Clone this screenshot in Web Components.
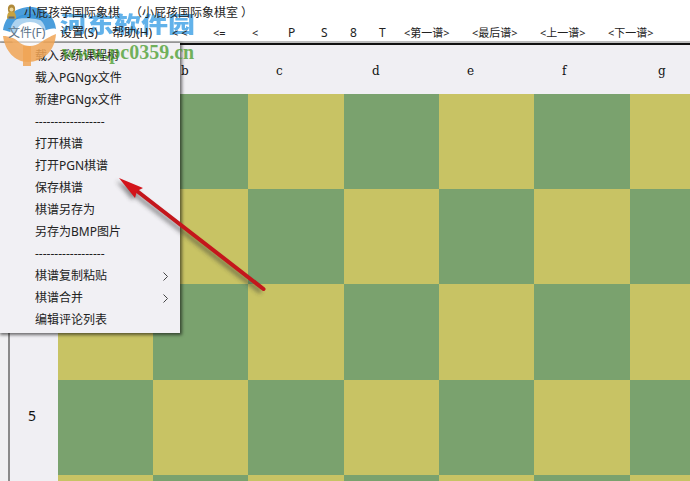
<!DOCTYPE html>
<html lang="zh"><head><meta charset="utf-8"><title>小屁孩学国际象棋</title>
<style>html,body{margin:0;padding:0;background:#fff}body{width:690px;height:481px;overflow:hidden;position:relative;font-family:"Noto Sans","Noto Sans CJK SC",sans-serif}
.open{padding-left:10px}.close{padding-left:3px}</style></head>
<body>
<app-window>
  <title-bar><span>小屁孩学国际象棋<span class="open">（</span>小屁孩国际象棋室<span class="close">）</span></span></title-bar>
  <menu-bar></menu-bar>
  <chess-board></chess-board>
  <file-menu></file-menu>
  <red-arrow></red-arrow>
  <water-mark></water-mark>
</app-window>
<script>
const FONT='"Noto Sans","Noto Sans CJK SC",sans-serif';
function def(name,html,init){customElements.define(name,class extends HTMLElement{constructor(){super();const r=this.attachShadow({mode:'open'});r.innerHTML=html;if(init)init(r);}});}

def('app-window',`<style>:host{display:flex;flex-direction:column;width:690px;height:481px;position:relative;overflow:hidden;background:#fff;color:#1a1a1a;font:12px ${FONT}}</style><slot></slot>`);

def('title-bar',`<style>:host{display:flex;align-items:center;gap:7px;height:22px;padding:1px 0 0 6px;box-sizing:border-box;font:12px "Noto Sans CJK SC",sans-serif;color:#222;position:relative;z-index:2}
svg{flex:none}</style>
<svg width="11" height="15" viewBox="0 0 11 15"><ellipse cx="5.500" cy="5" rx="3.600" ry="4.500" fill="#b08a3a"/><path d="M1 14.500c0-6 2-7 4.500-7s4.500 1 4.500 7z" fill="#c9a23e"/><circle cx="5.500" cy="5.500" r="2" fill="#ecd59a"/><path d="M2.500 12.500h6v2h-6z" fill="#5c6a7a"/></svg>
<slot></slot>`);

def('menu-bar',`<style>:host{display:grid;grid-template-columns:52px 52px 60px 41px 39px 36px 33px 29px 29px 25px 68px 68px 68px 68px;height:21px;padding-left:8px;box-sizing:border-box;align-items:center;font-size:12px;color:#222;line-height:21px;position:relative;z-index:2}
span{white-space:pre}.t{font-size:11px}.f{color:#5d7488}</style>
<span class="f">文件(F)</span><span>设置(S)</span><span>帮助(H)</span><span class="t">&lt; &lt;</span><span class="t">&lt;=</span><span class="t">&lt;</span><span>P</span><span>S</span><span>8</span><span>T</span><span class="t">&lt;第一谱&gt;</span><span class="t">&lt;最后谱&gt;</span><span class="t">&lt;上一谱&gt;</span><span class="t">&lt;下一谱&gt;</span>`);

def('chess-board',`<style>:host{display:flex;flex:1;min-height:0;overflow:hidden;flex-direction:column;border-top:2px solid #111;box-shadow:0 -2px 0 #bdbdbd;background:#f0eff3;box-sizing:border-box}
.wrap{display:flex;flex:1;min-height:0}
.gut{width:8px;flex:none;background:#f0f0f2;border-right:2px solid #8a8a8a}
.grid{display:grid;grid-template-columns:48px 95px 95px 96px 95px 95px 96px 95px;grid-template-rows:49px 95px 95px 96px 95px 95px;align-content:start;flex:none}
.col{font:12px "DejaVu Serif","Liberation Serif",serif;color:#111;display:flex;align-items:center;padding-left:28px;padding-top:2px;box-sizing:border-box}
.row{font:14px "Noto Sans",sans-serif;color:#111;display:flex;justify-content:center;padding:24px 4px 0 0;box-sizing:border-box;line-height:24px}
.y{background:#c8c364}.g{background:#7aa26e}</style>
<div class="wrap"><div class="gut"></div><div class="grid" id="g"></div></div>`,r=>{
  const g=r.getElementById('g');let h='<div></div>';
  'abcdefg'.split('').forEach(c=>h+=`<div class="col">${c==='a'?'':c}</div>`);
  for(let i=0;i<5;i++){h+=`<div class="row">${i===3?'5':''}</div>`;for(let j=0;j<7;j++)h+=`<div class="${(i+j)%2?'g':'y'}"></div>`;}
  g.innerHTML=h;
});

def('file-menu',`<style>:host{position:absolute;left:0;top:43px;width:180px;height:290px;background:#f1f0f4;box-shadow:1px 1px 3px 1px rgba(0,0,0,.55);display:flex;flex-direction:column;padding-top:2px;box-sizing:border-box;font-size:12px;color:#222}
div{height:22px;line-height:22px;padding-left:35px;position:relative;white-space:pre}
.sub svg{position:absolute;left:163px;top:7px}</style>
<div>载入系统课程树</div><div>载入PGNgx文件</div><div>新建PGNgx文件</div><div>------------------</div><div>打开棋谱</div><div>打开PGN棋谱</div><div>保存棋谱</div><div>棋谱另存为</div><div>另存为BMP图片</div><div>------------------</div>
<div class="sub">棋谱复制粘贴<svg width="5" height="9" viewBox="0 0 5 9"><path d="M.5.5l4 4-4 4" fill="none" stroke="#444"/></svg></div>
<div class="sub">棋谱合并<svg width="5" height="9" viewBox="0 0 5 9"><path d="M.5.5l4 4-4 4" fill="none" stroke="#444"/></svg></div>
<div>编辑评论列表</div>`);

def('red-arrow',`<style>:host{position:absolute;left:0;top:0;width:690px;height:481px;pointer-events:none}svg{display:block}</style>
<svg width="690" height="481" viewBox="0 0 690 481"><defs><filter id="s" x="-20%" y="-20%" width="150%" height="150%"><feGaussianBlur stdDeviation="2"/></filter></defs>
<g transform="translate(-3,3)" opacity=".5" filter="url(#s)"><path d="M264 289L136 190" stroke="#333" stroke-width="4.500" fill="none"/><path d="M119 178L143 188L135 197Z" fill="#333"/></g>
<path d="M263.500 289L137 191" stroke="#c4161c" stroke-width="4" fill="none" stroke-linecap="round"/><path d="M119 178L143 188L137 191L135 198Z" fill="#d3141b"/></svg>`);

def('water-mark',`<style>:host{position:absolute;left:0;top:0;width:230px;height:70px;pointer-events:none}
svg{position:absolute;left:0;top:4px}
.a{position:absolute;left:60px;top:5px;font:900 27px/36px "Noto Sans CJK SC",sans-serif;color:rgba(70,165,230,.85);white-space:nowrap;transform:scaleY(.82);transform-origin:50% 50%}
.b{position:absolute;left:62px;top:42px;font:700 20px/20px "Liberation Serif",serif;color:rgba(70,155,40,.75);white-space:nowrap}</style>
<svg width="60" height="66" viewBox="0 0 60 66">
<path d="M3 26C5 12 16 3 30 3s25 9 26 22c-3-1-8 0-12 2-3-6-8-9-14-9-9 0-13 5-15 12-3-2-8-3-12-4z" fill="rgba(50,145,215,.88)"/>
<circle cx="28" cy="29" r="18" fill="rgba(255,255,255,.55)"/>
<path d="M14 16c4-4 9-6 15-6 6 0 11 3 14 7-5-3-24-4-29-1z" fill="rgba(50,145,215,.9)"/>
<path d="M3 32c6 0 12 2 17 7 6 4 15 4 21-1 5-3 9-6 15-8-1 17-13 28-28 28C15 58 5 47 3 32z" fill="rgba(240,165,85,.85)"/>
<path d="M23 42h8v20h-8z" fill="rgba(240,165,85,.85)"/>
</svg>
<span class="a">河东软件园</span><span class="b">www.pc0359.cn</span>`);
</script>
</body></html>
